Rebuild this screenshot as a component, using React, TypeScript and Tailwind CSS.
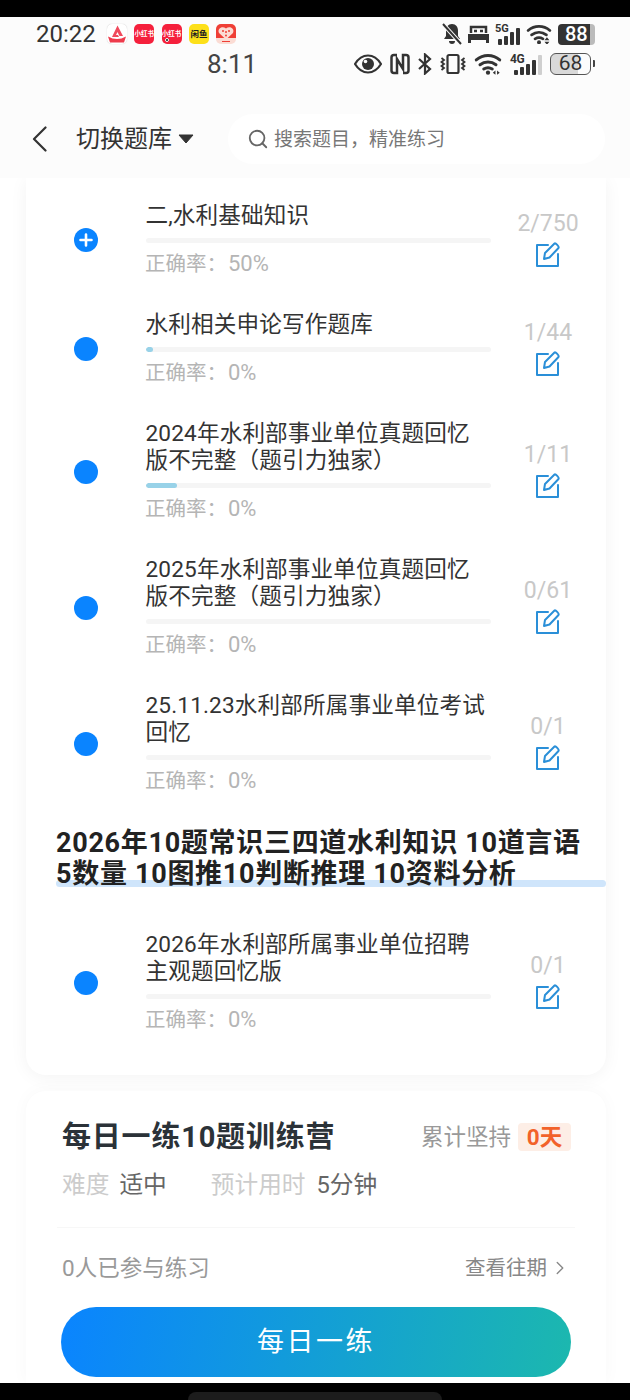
import React from 'react';
import { ChevronRight, Search } from 'lucide-react';

const font = { fontFamily: 'Roboto, "Noto Sans CJK SC", sans-serif' };

const AppTile = ({ bg, children }: { bg: string; children?: React.ReactNode }) => (
  <div className={`relative w-[20px] h-[20px] rounded-[5px] flex items-center justify-center ${bg}`}>{children}</div>
);

const MiniLabel = ({ text, color }: { text: string; color: string }) => (
  <span className={`leading-none font-bold whitespace-nowrap ${color}`}>{text}</span>
);

const Bars = ({ levels, width }: { levels: number[]; width: string }) => (
  <div className="flex items-end gap-[2px]">
    {levels.map((h, i) => (
      <div key={i} className={`${width} rounded-[1px] ${i === 4 ? 'bg-[#cfcfcf]' : 'bg-[#333]'}`} style={{ height: h }} />
    ))}
  </div>
);

// wifi arcs with the little traffic arrows beside the dot
const Wifi = ({ size, sideways }: { size: number; sideways?: boolean }) => (
  <svg width={size} height={size * 0.8} viewBox="0 0 26 21" fill="none" stroke="#333" strokeWidth="2.8" strokeLinecap="round">
    <path d="M2 6.500c6.500-5.500 15.500-5.500 22 0" />
    <path d="M5.500 11c4.500-3.500 10.500-3.500 15 0" />
    <path d="M9 15c2.500-1.500 5.500-1.500 8 0" />
    <circle cx="13" cy="18.500" r="2" fill="#333" stroke="none" />
    {sideways
      ? <path d="M20 16.500v4l-2.500-2zM21.500 16.500v4l2.500-2z" fill="#333" stroke="none" />
      : <path d="M21 13.500l2.500 3h-5zM21 21l2.500-3h-5z" fill="#333" stroke="none" />}
  </svg>
);

const StatusTop = () => (
  <div className="h-[34px] flex items-center pl-[36px] pr-[35px] text-[#333]">
    <span className="text-[24px] leading-none w-[71px]">20:22</span>
    <div className="flex gap-[7.3px]">
      <AppTile bg="bg-white shadow-[0_0_1px_rgba(0,0,0,0.25)]">
        <svg width="20" height="20" viewBox="0 0 20 20">
          <path d="M10.500 1.500 L16 12 H12.500 L10.500 8 L9 11 H11 L12 13 H5 Z" fill="#f04a5c" />
          <path d="M1 12.500 Q10 17.500 19 12.500 L17 18.500 H3 Z" fill="#ee3b4c" />
        </svg>
      </AppTile>
      <AppTile bg="bg-[#f5203c]"><MiniLabel text="小红书" color="text-white text-[6.5px]" /></AppTile>
      <AppTile bg="bg-[#f5203c]">
        <MiniLabel text="小红书" color="text-white text-[6.5px]" />
        <div className="absolute left-[3px] bottom-[2px] w-[4px] h-[4px] rounded-full bg-black border border-white" />
      </AppTile>
      <AppTile bg="bg-[#fde01a]"><MiniLabel text="闲鱼" color="text-[#222] text-[8.5px]" /></AppTile>
      <AppTile bg="bg-[linear-gradient(180deg,#ef3f36_70%,#fbdcd4_70%)]">
        <svg width="20" height="20" viewBox="0 0 20 20">
          <path d="M10 15.500 L3 9 C1 5 6 1.500 10 4.500 C14 1.500 19 5 17 9 Z" fill="#fbdcd4" />
          <circle cx="7" cy="7" r="1" fill="#ef3f36" />
          <circle cx="10" cy="8" r="1" fill="#ef3f36" />
          <circle cx="13" cy="7" r="1" fill="#ef3f36" />
          <circle cx="10" cy="11.500" r="1" fill="#ef3f36" />
          <path d="M6 17.500h8" stroke="#ef3f36" strokeWidth="1" />
        </svg>
      </AppTile>
    </div>
    <div className="ml-auto flex items-center gap-[6px]">
      <svg width="20" height="22" viewBox="0 0 20 22" fill="#333">
        <path d="M10 1c-4 0-6 3-6 7v5l-2 3h16l-2-3V8c0-4-2-7-6-7z" />
        <path d="M7 18h6a3 3 0 0 1-6 0z" />
        <path d="M1 1 19 21" stroke="#fcfcfc" strokeWidth="4" />
        <path d="M1 1 19 21" stroke="#333" strokeWidth="2" />
      </svg>
      <svg width="21" height="18" viewBox="0 0 21 18" fill="none" stroke="#333">
        <path d="M3 8V2h15v6" strokeWidth="2.5" />
        <path d="M0 9h21v6H0zM0 15h3v3H0zM18 15h3v3h-3z" fill="#333" stroke="none" />
        <path d="M6 6h3M12 6h3" strokeWidth="2.5" />
      </svg>
      <div className="relative w-[25px] h-[22px]">
        <span className="absolute left-0 top-0 text-[11px] leading-none font-bold">5G</span>
        <div className="absolute right-0 bottom-0"><Bars levels={[6, 9, 13, 17]} width="w-[4px]" /></div>
      </div>
      <Wifi size={26} />
      <div className="w-[37px] h-[21px] rounded-[4px] bg-[linear-gradient(90deg,#333_86%,#bbb_86%)] text-white text-[20px] font-medium leading-[21px] pl-[7px]">88</div>
    </div>
  </div>
);

const StatusSecond = () => (
  <div className="h-[26px] flex items-center pl-[207px] pr-[35px] text-[#333]">
    <span className="text-[26px] leading-none text-[#444]">8:11</span>
    <div className="ml-auto flex items-center gap-[8px]">
      <svg width="28" height="20" viewBox="0 0 28 20" fill="none">
        <path d="M1 10C5 3.500 9 1.500 14 1.500S23 3.500 27 10c-4 6.500-8 8.500-13 8.500S5 16.500 1 10z" stroke="#333" strokeWidth="2.2" />
        <circle cx="14" cy="10" r="6" fill="#333" />
        <circle cx="11.500" cy="7.500" r="1.800" fill="#fcfcfc" />
      </svg>
      <svg width="20" height="22" viewBox="0 0 20 22" fill="none" stroke="#333" strokeWidth="2.5">
        <path d="M7 2H4Q1.500 2 1.500 4.500v13Q1.500 20 4 20h3V6l6 10V2h3q2.500 0 2.500 2.500v13Q18.500 20 16 20h-3" />
      </svg>
      <svg width="14" height="22" viewBox="0 0 14 22" fill="none" stroke="#333" strokeWidth="2.2">
        <path d="M1 6l11 10-5 4.500v-19L12 6 1 16" />
      </svg>
      <svg width="26" height="22" viewBox="0 0 26 22" fill="none" stroke="#333" strokeWidth="1.8">
        <rect x="7.5" y="2" width="11" height="18" rx="1.5" strokeWidth="2.2" />
        <path d="M1.500 5l2.500 2-2.500 2 2.500 2-2.500 2 2.500 2-2.500 2M24.500 5l-2.500 2 2.500 2-2.500 2 2.500 2-2.500 2 2.500 2" />
      </svg>
      <Wifi size={28} sideways />
      <div className="relative w-[32px] h-[22px]">
        <span className="absolute left-0 top-0 text-[12px] leading-none font-bold tracking-[-0.5px]">4G</span>
        <div className="absolute right-0 bottom-0"><Bars levels={[5, 8, 11, 15, 20]} width="w-[4px]" /></div>
      </div>
      <div className="flex items-center gap-[2px]">
        <div className="w-[41px] h-[22px] rounded-[6px] border-[1.5px] border-[#555] bg-[linear-gradient(90deg,#d9d9d9_70%,#fcfcfc_70%)] text-[#333] text-[21px] leading-[19px] text-center">68</div>
        <div className="w-[2px] h-[7px] bg-[#444] rounded-r-[1px]" />
      </div>
    </div>
  </div>
);

const NavBar = () => (
  <div className="flex items-center h-[50px] mt-[37px] mb-[14px] pl-[32px] pr-[25px]">
    <svg width="15" height="26" viewBox="0 0 15 26" fill="none" stroke="#333" strokeWidth="2.2" strokeLinecap="round" strokeLinejoin="round">
      <path d="M13.500 1.500 2 13l11.500 11.500" />
    </svg>
    <span className="ml-[29px] text-[24px] leading-none text-[#333]">切换题库</span>
    <svg width="16" height="10" viewBox="0 0 16 10" className="ml-[6px]">
      <path d="M1 1h14L8 9z" fill="#333" stroke="#333" strokeLinejoin="round" />
    </svg>
    <div className="ml-[34px] flex-1 h-[50px] rounded-full bg-white flex items-center pl-[19px]">
      <Search size={22} strokeWidth={2} className="text-[#666]" />
      <span className="ml-[5px] text-[19px] text-[#777] leading-none">{'搜索题目\uFF0C精准练习'}</span>
    </div>
  </div>
);

const EditIcon = () => (
  <svg width="26" height="25" viewBox="0 0 26 25" fill="none" stroke="#2a8fd8" strokeWidth="2" strokeLinejoin="round" strokeLinecap="round">
    <path d="M13 3H2v21h21V12" />
    <path d="M9 17l1-6L19.500 1.500c1-.8 5 3 4 4.500L14.500 15.500z" />
  </svg>
);

type Topic = { title: string; count: string; accuracy: string; fill?: number; plus?: boolean };

const TopicRow = ({ title, count, accuracy, fill = 0, plus }: Topic) => (
  <div className="flex items-center">
    <div className="w-[24px] h-[24px] rounded-full bg-[#0a84ff] ml-[48px] flex items-center justify-center shrink-0">
      {plus && (
        <svg width="14" height="14" viewBox="0 0 14 14" stroke="#fff" strokeWidth="2.6" strokeLinecap="round">
          <path d="M7 1.500v11M1.500 7h11" />
        </svg>
      )}
    </div>
    <div className="ml-[48px] w-[345px] shrink-0">
      <div className="text-[22.6px] tracking-[0.15px] leading-[27px] text-[#333] -ml-[0.5px]">{title}</div>
      <div className="mt-[9px] h-[5px] rounded-full bg-[#f5f5f5] overflow-hidden">
        {fill > 0 && <div className="h-full rounded-full bg-[#98d2e8]" style={{ width: fill }} />}
      </div>
      <div className="mt-[8px] h-[27px] text-[20.5px] leading-[27px] text-[#b5b5b5] -ml-[1px]">
        {'正确率\uFF1A'}<span className="text-[22px] leading-none ml-[1px]">{accuracy}</span>
      </div>
    </div>
    <div className="ml-[6px] flex-1 flex flex-col items-center pr-[7px] -translate-y-[2px]">
      <span className="text-[23px] leading-[27px] text-[#c8c8c8]">{count}</span>
      <div className="mt-[5px] h-[25px]"><EditIcon /></div>
    </div>
  </div>
);

const topics: Topic[] = [
  { title: '二,水利基础知识', count: '2/750', accuracy: '50%', plus: true },
  { title: '水利相关申论写作题库', count: '1/44', accuracy: '0%', fill: 7 },
  { title: '2024年水利部事业单位真题回忆版不完整\uFF08题引力独家\uFF09', count: '1/11', accuracy: '0%', fill: 31 },
  { title: '2025年水利部事业单位真题回忆版不完整\uFF08题引力独家\uFF09', count: '0/61', accuracy: '0%' },
  { title: '25.11.23水利部所属事业单位考试回忆', count: '0/1', accuracy: '0%' },
];

const TopicCard = () => (
  <div className="bg-white rounded-b-[20px] shadow-[0_2px_18px_rgba(0,0,0,0.05)] pt-[24px] pb-[41px]">
    <div className="flex flex-col gap-[33px]">
      {topics.map((t) => <TopicRow key={t.title} {...t} />)}
    </div>
    <div className="relative ml-[30px] mt-[33px] mb-[40px] pb-[1px]">
      <div className="absolute left-0 right-0 top-[52px] h-[7px] rounded-full bg-[#cfe5fb]" />
      <div className="relative text-[27px] leading-[31px] font-bold tracking-[0.7px] text-[#222] whitespace-nowrap">
        2026年10题常识三四道水利知识 10道言语<br />5数量 10图推10判断推理 10资料分析
      </div>
    </div>
    <TopicRow title="2026年水利部所属事业单位招聘主观题回忆版" count="0/1" accuracy="0%" />
  </div>
);

const DailyCard = () => (
  <div className="mt-[16px] bg-white rounded-t-[20px] shadow-[0_0_18px_rgba(0,0,0,0.03)] px-[35px] pt-[28px] flex-1">
    <div className="flex items-center h-[36px] pl-[1px]">
      <span className="text-[29px] tracking-[0.8px] leading-none font-bold text-[#2b3238]">每日一练10题训练营</span>
      <span className="ml-auto text-[22.5px] leading-none text-[#999]">累计坚持</span>
      <span className="ml-[7px] w-[53px] h-[28px] rounded-[4px] bg-[#fdeee6] text-[#f2622a] text-[22.5px] font-bold leading-[28px] text-center">0天</span>
    </div>
    <div className="flex items-center mt-[16px] h-[30px] pl-[1px] text-[23.7px] leading-none">
      <span className="text-[#ccc]">难度</span>
      <span className="ml-[10px] text-[#666]">适中</span>
      <span className="ml-[44px] text-[#ccc]">预计用时</span>
      <span className="ml-[11px] text-[#666]">5分钟</span>
    </div>
    <div className="-mx-[4px] mt-[26px] h-[1px] bg-[#f7f7f7]" />
    <div className="flex items-center mt-[25px] h-[30px] pl-[1px]">
      <span className="text-[22.5px] leading-none text-[#999]">0人已参与练习</span>
      <span className="ml-auto text-[20.5px] leading-none text-[#888]">查看往期</span>
      <ChevronRight size={22} strokeWidth={1.5} className="text-[#888] ml-[2px]" />
    </div>
    <div className="mt-[24px] h-[70px] rounded-full bg-[linear-gradient(100deg,#0a84ff,#1cb8ae)] flex items-center justify-center text-white text-[27px] tracking-[2.5px] leading-none">
      每日一练
    </div>
  </div>
);

export default function App() {
  return (
    <div className="w-[630px] h-[1400px] bg-[#fcfcfc] flex flex-col overflow-hidden" style={font}>
      <div className="h-[17px] bg-black shrink-0" />
      <StatusTop />
      <StatusSecond />
      <NavBar />
      <div className="flex-1 min-h-0 flex flex-col bg-white pl-[26px] pr-[24px] overflow-hidden">
        <TopicCard />
        <DailyCard />
      </div>
      <div className="h-[17px] bg-black shrink-0 flex items-end justify-center">
        <div className="w-[254px] h-[8px] rounded-t-full bg-[#1c1c1c]" />
      </div>
    </div>
  );
}
